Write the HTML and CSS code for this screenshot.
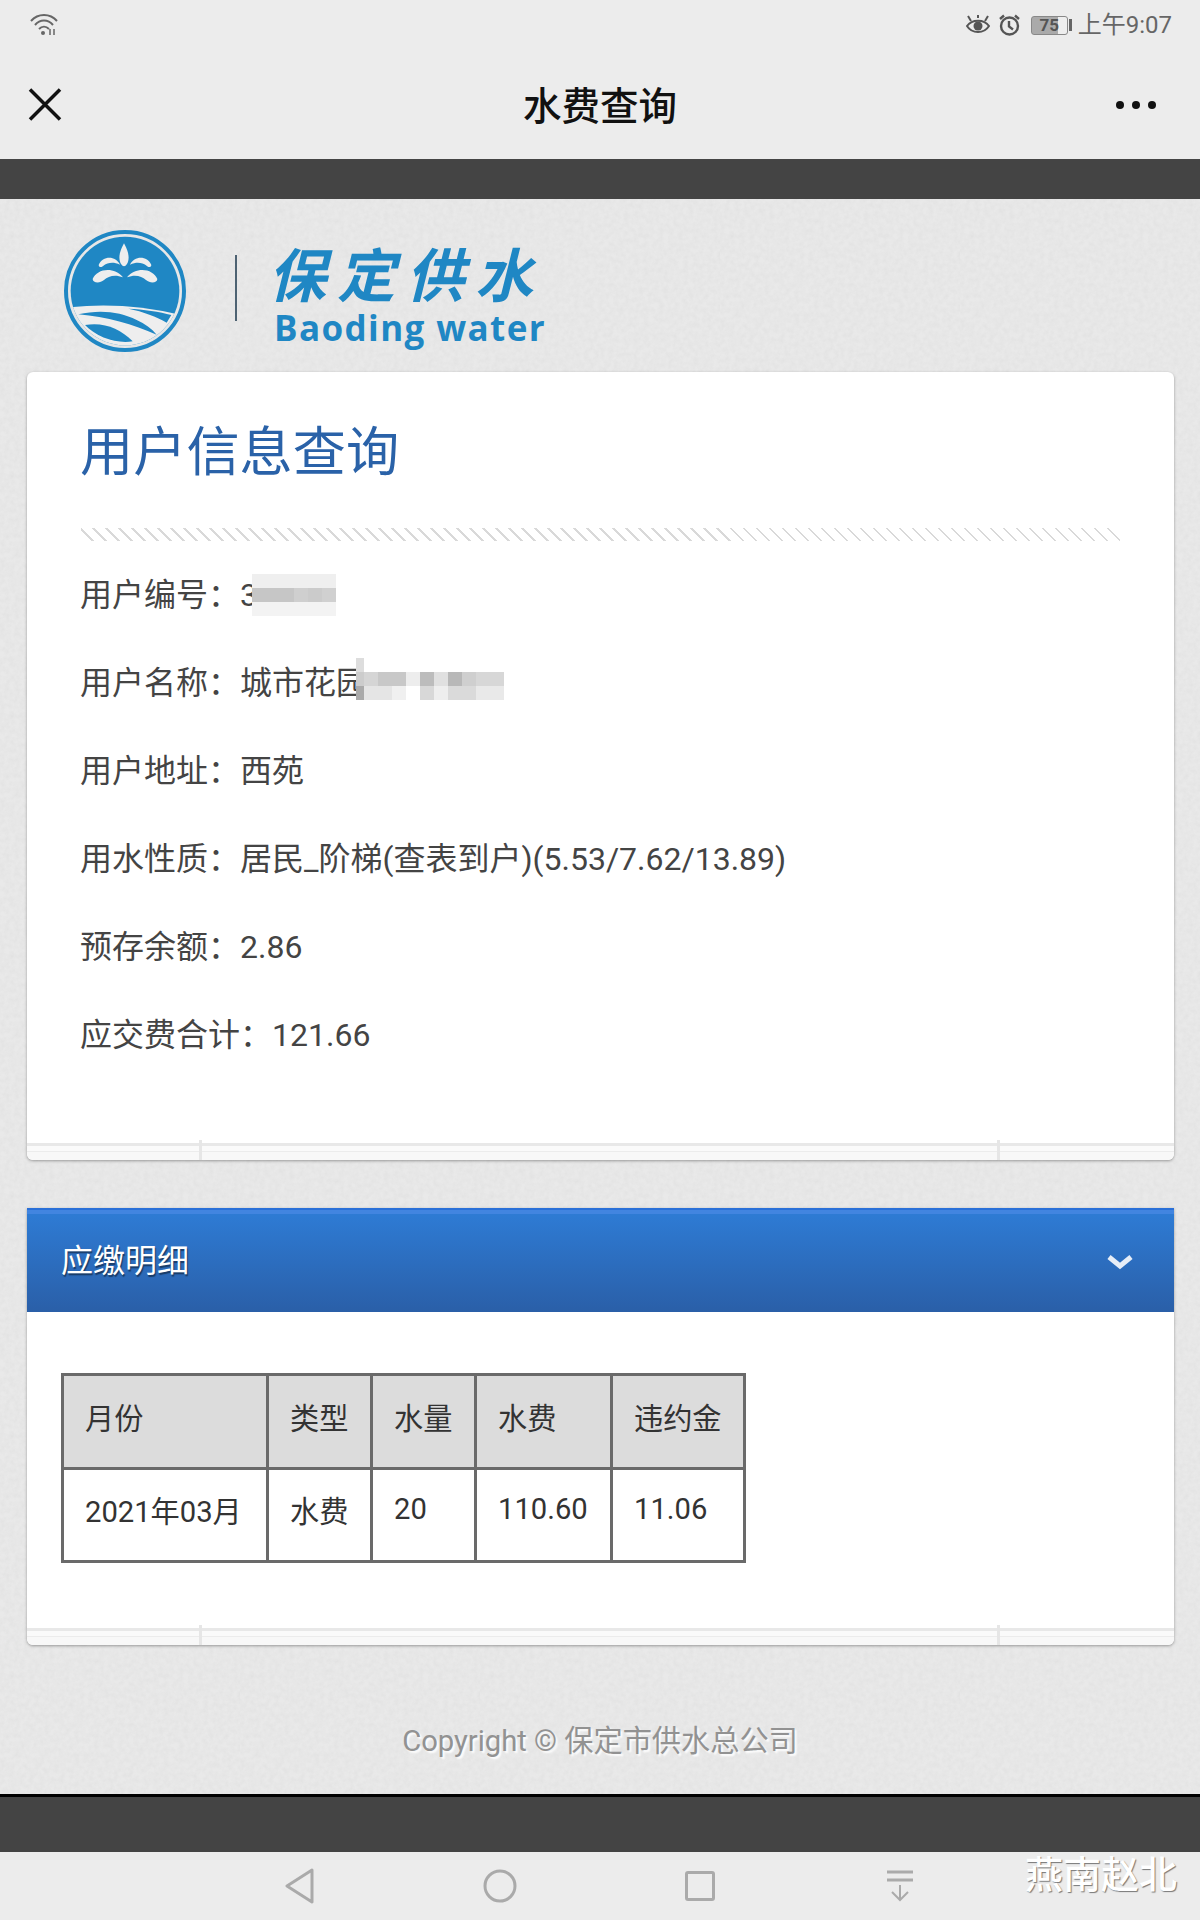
FILE: index.html
```html
<!DOCTYPE html>
<html lang="zh-CN">
<head>
    <meta charset="UTF-8">
    <meta name="viewport" content="width=device-width, initial-scale=1.0">
    <title>水费查询</title>
    <link rel="stylesheet" href="styles.css">
</head>
<body>
    <header class="appbar">
        <div class="status">
            <svg class="wifi" width="28" height="23" viewBox="0 0 28 23" fill="none" stroke="#666" stroke-width="2">
                <path d="M1 8 C8 0 20 0 27 8"/>
                <path d="M5 12 C10 6 18 6 23 12"/>
                <path d="M9 16 C12 13 16 13 19 16"/>
                <circle cx="13" cy="20" r="2" fill="#666" stroke="none"/>
                <path d="M20 16 v6 M24 16 v6" stroke-width="1.5"/>
            </svg>
            <div class="status-right">
                <svg width="24" height="22" viewBox="0 0 24 22" fill="none" stroke="#555" stroke-width="2">
                    <path d="M1 12 C6 5 18 5 23 12 C18 20 6 20 1 12Z"/>
                    <circle cx="12" cy="12" r="4.5" fill="#555" stroke="none"/>
                    <path d="M2 2 L5 7 M22 2 L19 7 M12 1 v3"/>
                </svg>
                <svg class="alarm" width="23" height="22" viewBox="0 0 23 22" fill="none" stroke="#555" stroke-width="2.4">
                    <circle cx="11.5" cy="12" r="8.5"/>
                    <path d="M11 7 v5.5 l4 3"/>
                    <path d="M2 5 L6 1.5 M21 5 L17 1.5"/>
                </svg>
                <div class="battery"><span class="battery-body">75</span><span class="battery-tip"></span></div>
                <span class="time">上午9:07</span>
            </div>
        </div>
        <div class="navbar">
            <svg class="close" width="34" height="33" viewBox="0 0 34 33" stroke="#111" stroke-width="3.5">
                <path d="M2 1.5 L32 31.5 M32 1.5 L2 31.5"/>
            </svg>
            <h2 class="page-title">水费查询</h2>
            <div class="more"><i></i><i></i><i></i></div>
        </div>
    </header>
    <div class="topbar"></div>

    <main class="content">
        <div class="brand">
            <svg class="brand-mark" width="160" height="140" viewBox="0 0 480 420">
                <defs><clipPath id="markClip"><circle cx="225" cy="213" r="163"/></clipPath></defs>
                <circle cx="225" cy="213" r="177" fill="none" stroke="#1f87c4" stroke-width="12"/>
                <g clip-path="url(#markClip)">
                    <rect width="480" height="420" fill="#1f87c4"/>
                    <path d="M40 264 Q230 240 420 292 L420 420 L40 420Z" fill="#eee"/>
                    <path d="M85 283 C150 268 210 275 260 300 C285 312 305 325 320 344 C250 314 170 290 85 283Z" fill="#1f87c4"/>
                    <path d="M235 266 C280 268 330 275 364 285 L350 308 C320 290 280 275 235 266Z" fill="#1f87c4"/>
                    <path d="M105 315 C160 305 210 325 248 364 C200 372 140 352 105 315Z" fill="#1f87c4"/>
                    <g fill="#eee">
                        <path d="M222 70 C208 95 204 115 213 132 Q222 146 231 132 C240 115 236 95 222 70Z"/>
                        <path id="sprayHigh" d="M146 135 C158 106 197 106 210 134 C190 124 172 128 162 136 C155 144 146 142 146 135Z"/>
                        <path id="sprayLow" d="M128 177 C140 146 192 138 219 172 C195 162 175 168 162 180 C148 192 128 188 128 177Z"/>
                        <use href="#sprayHigh" transform="matrix(-1 0 0 1 450 0)"/>
                        <use href="#sprayLow" transform="matrix(-1 0 0 1 450 0)"/>
                    </g>
                </g>
            </svg>
            <span class="brand-divider"></span>
            <div class="brand-name">
                <div class="brand-cn">保定供水</div>
                <div class="brand-en">Baoding water</div>
            </div>
        </div>

        <section class="card user-card">
            <h1 class="card-title">用户信息查询</h1>
            <div class="hatch"></div>
            <p class="info-row">用户编号：3
                <svg class="mosaic mosaic-id" width="84" height="42" shape-rendering="crispEdges">
                    <rect width="84" height="14" fill="#efefef"/>
                    <rect y="14" width="42" height="14" fill="#c6c6c6"/>
                    <rect x="42" y="14" width="14" height="14" fill="#cfcfcf"/>
                    <rect x="56" y="14" width="14" height="14" fill="#cbcbcb"/>
                    <rect x="70" y="14" width="14" height="14" fill="#d0d0d0"/>
                    <rect y="28" width="84" height="14" fill="#f3f3f3"/>
                </svg>
            </p>
            <p class="info-row">用户名称：城市花园
                <svg class="mosaic mosaic-name" width="148" height="42" shape-rendering="crispEdges">
                    <rect width="148" height="42" fill="#fff"/>
                    <rect width="8" height="14" fill="#ddd"/>
                    <rect y="14" width="8" height="14" fill="#ccc"/>
                    <rect y="28" width="8" height="14" fill="#aaa"/>
                    <rect x="8" y="14" width="14" height="14" fill="#d5d5d5"/>
                    <rect x="22" y="14" width="28" height="14" fill="#c8c8c8"/>
                    <rect x="50" y="14" width="14" height="14" fill="#ededed"/>
                    <rect x="64" y="14" width="14" height="14" fill="#bcbcbc"/>
                    <rect x="78" y="14" width="14" height="14" fill="#e0e0e0"/>
                    <rect x="92" y="14" width="14" height="14" fill="#b8b8b8"/>
                    <rect x="106" y="14" width="14" height="14" fill="#cfcfcf"/>
                    <rect x="120" y="14" width="28" height="14" fill="#d7d7d7"/>
                    <rect x="8" y="28" width="28" height="14" fill="#e5e5e5"/>
                    <rect x="36" y="28" width="14" height="14" fill="#f0f0f0"/>
                    <rect x="64" y="28" width="14" height="14" fill="#d8d8d8"/>
                    <rect x="78" y="28" width="14" height="14" fill="#eee"/>
                    <rect x="92" y="28" width="28" height="14" fill="#dadada"/>
                    <rect x="120" y="28" width="28" height="14" fill="#e9e9e9"/>
                </svg>
            </p>
            <p class="info-row">用户地址：西苑</p>
            <p class="info-row">用水性质：居民_阶梯(查表到户)(5.53/7.62/13.89)</p>
            <p class="info-row">预存余额：2.86</p>
            <p class="info-row">应交费合计：121.66</p>
            <div class="card-foot"></div>
        </section>

        <section class="card detail-card">
            <div class="detail-head">
                <span class="detail-title">应缴明细</span>
                <svg class="detail-arrow" width="26" height="16" viewBox="0 0 26 16" fill="none" stroke="#e6edf7" stroke-width="5">
                    <path d="M2 3 L13 12 L24 3"/>
                </svg>
            </div>
            <table class="bill-table">
                <tr><th>月份</th><th>类型</th><th>水量</th><th>水费</th><th>违约金</th></tr>
                <tr><td>2021年03月</td><td>水费</td><td>20</td><td>110.60</td><td>11.06</td></tr>
            </table>
            <div class="card-foot"></div>
        </section>

        <p class="copyright">Copyright © 保定市供水总公司</p>
    </main>

    <div class="bottombar"></div>
    <nav class="softkeys">
        <div class="softkey">
            <svg width="30" height="36" viewBox="0 0 30 36" fill="none" stroke="#aaa" stroke-width="3" stroke-linejoin="round">
                <path d="M27 2 L2 18 L27 34Z"/>
            </svg>
        </div>
        <div class="softkey">
            <svg width="34" height="34" viewBox="0 0 34 34" fill="none" stroke="#aaa" stroke-width="3">
                <circle cx="17" cy="17" r="15"/>
            </svg>
        </div>
        <div class="softkey">
            <svg width="30" height="30" viewBox="0 0 30 30" fill="none" stroke="#aaa" stroke-width="3">
                <rect x="1.5" y="1.5" width="27" height="27" rx="1.5"/>
            </svg>
        </div>
        <div class="softkey">
            <svg width="28" height="32" viewBox="0 0 28 32" fill="none" stroke="#aaa" stroke-width="3">
                <path d="M1 2 H27 M1 10 H27"/>
                <path d="M14 15 V30 M6 22 L14 30 L22 22" stroke-width="2"/>
            </svg>
        </div>
        <span class="watermark">燕南赵北</span>
    </nav>
</body>
</html>
```

FILE: styles.css
```css
* {
    box-sizing: border-box;
}
body {
    margin: 0;
    width: 1200px;
    height: 1920px;
    overflow: hidden;
    display: flex;
    flex-direction: column;
    font-family: Roboto, "Noto Sans CJK SC", sans-serif;
    background-color: #ececec;
}

/* top of the phone screen */
.appbar {
    height: 159px;
    background-color: #ececec;
}
.status {
    height: 50px;
    padding: 14px 28px 0 30px;
    display: flex;
    justify-content: space-between;
    align-items: flex-start;
}
.wifi {
    margin-top: -1px;
}
.status-right {
    display: flex;
    align-items: center;
    height: 22px;
    color: #666;
}
.alarm {
    margin-left: 8px;
}
.battery {
    display: flex;
    align-items: center;
    margin-left: 10px;
}
.battery-body {
    width: 37px;
    height: 19px;
    border: 1px solid #888;
    border-radius: 3px;
    background: linear-gradient(to right, #aaa 75%, #eee 75%);
    color: #555;
    font-size: 17px;
    font-weight: 700;
    line-height: 17px;
    text-align: center;
}
.battery-tip {
    width: 3px;
    height: 12px;
    margin-left: 1px;
    background-color: #666;
}
.time {
    margin-left: 6px;
    font-size: 24px;
    line-height: 22px;
}
.navbar {
    height: 109px;
    padding: 0 44px 0 28px;
    display: grid;
    grid-template-columns: 1fr auto 1fr;
    align-items: center;
}
.page-title {
    margin: 0 0 4px 16px;
    font-size: 38.5px;
    font-weight: 500;
    color: #111;
}
.more {
    justify-self: end;
    display: flex;
    gap: 8px;
}
.more i {
    width: 8px;
    height: 8px;
    border-radius: 50%;
    background-color: #111;
}
.topbar {
    height: 40px;
    background-color: #444;
}

/* page */
.content {
    flex: 1;
    background-color: #e9e9e9;
    background-image: url("data:image/svg+xml,%3Csvg xmlns='http://www.w3.org/2000/svg' width='240' height='240'%3E%3Cfilter id='n'%3E%3CfeTurbulence type='fractalNoise' baseFrequency='.2' numOctaves='2' stitchTiles='stitch'/%3E%3CfeColorMatrix values='0 0 0 0 .6 0 0 0 0 .6 0 0 0 0 .6 0 0 0 .35 -.1'/%3E%3C/filter%3E%3Crect width='240' height='240' filter='url(%23n)'/%3E%3C/svg%3E");
}
.brand {
    height: 173px;
    padding-left: 50px;
    display: flex;
    align-items: flex-start;
}
.brand-mark {
    margin-top: 21px;
}
.brand-divider {
    width: 2px;
    height: 66px;
    margin: 56px 0 0 25px;
    background-color: #4d6272;
}
.brand-name {
    margin: 46px 0 0 36px;
    color: #1f87c4;
}
.brand-cn {
    font-size: 58px;
    font-weight: 700;
    line-height: 64px;
    letter-spacing: 11px;
    white-space: nowrap;
    transform: skewX(-14deg);
}
.brand-en {
    margin-left: 1px;
    font-family: "Open Sans", sans-serif;
    font-size: 35px;
    font-weight: 700;
    line-height: 38px;
    letter-spacing: 1.4px;
    white-space: nowrap;
}

.card {
    position: relative;
    margin: 0 26px 0 27px;
    background-color: #fff;
    border-radius: 6px;
    box-shadow: 0 1px 3px rgba(0, 0, 0, 0.35);
}
.user-card {
    height: 788px;
    padding: 49px 53px 0;
}
.card-title {
    margin: 0;
    font-size: 53.2px;
    font-weight: 400;
    line-height: 64px;
    color: #2a62a8;
}
.hatch {
    height: 13px;
    margin: 43px 1px 0;
    background-image: repeating-linear-gradient(45deg, transparent 0 7.4px, #d9d9d9 7.4px 9.2px);
}
.info-row {
    position: relative;
    margin: 0;
    font-size: 32px;
    line-height: 88px;
    color: #444;
    white-space: nowrap;
}
.hatch + .info-row {
    margin-top: 10px;
}
.mosaic {
    position: absolute;
}
.mosaic-id {
    left: 172px;
    top: 23px;
}
.mosaic-name {
    left: 276px;
    top: 19px;
}
.card-foot {
    position: absolute;
    left: 0;
    right: 0;
    bottom: 0;
    height: 17px;
    border-top: 3px solid #e8e8e8;
    border-radius: 0 0 6px 6px;
    background: linear-gradient(to bottom, #fafafa 0 5px, #ececec 5px 6px, #f8f8f8 6px);
}
.card-foot::before,
.card-foot::after {
    content: "";
    position: absolute;
    top: -6px;
    bottom: 0;
    width: 3px;
    background-color: #e6e6e6;
}
.card-foot::before {
    left: 172px;
}
.card-foot::after {
    right: 174px;
}

.detail-card {
    height: 437px;
    margin-top: 48px;
    border-radius: 0 0 6px 6px;
}
.detail-head {
    height: 104px;
    padding: 0 41px 0 34px;
    display: flex;
    justify-content: space-between;
    align-items: center;
    border-top: 2px solid #2a70d8;
    background: linear-gradient(to bottom, #4285e0 0 4px, #2e7bd4 4px, #2a5fa8 100%);
    color: #fff;
    font-size: 32px;
    text-shadow: 1px 2px 1px rgba(0, 0, 0, 0.45);
}
.detail-title {
    margin-bottom: 7px;
}
.detail-arrow {
    margin-top: 2px;
}
.bill-table {
    width: 682px;
    margin: 61px 0 0 34px;
    table-layout: fixed;
    border-collapse: collapse;
    border: 3px solid #6a6a6a;
    font-size: 29.2px;
    color: #333;
}
.bill-table th,
.bill-table td {
    height: 93px;
    padding: 0 0 12px 21px;
    border: 3px solid #6a6a6a;
    font-weight: 400;
    text-align: left;
    white-space: nowrap;
}
.bill-table th {
    height: 94px;
    background-color: #dcdcdc;
}
.bill-table th:nth-child(1) {
    width: 205px;
}
.bill-table th:nth-child(2),
.bill-table th:nth-child(3) {
    width: 104px;
}
.bill-table th:nth-child(4) {
    width: 136px;
}
.bill-table th:nth-child(5) {
    width: 133px;
}

.copyright {
    margin: 78px 0 0;
    font-size: 29.2px;
    line-height: 36px;
    text-align: center;
    color: #929292;
    text-shadow: 2px 2px 2px #fff;
}

.bottombar {
    height: 58px;
    border-top: 3px solid #000;
    background-color: #444;
}
.softkeys {
    position: relative;
    height: 68px;
    padding-left: 200px;
    display: flex;
    align-items: center;
    background-color: #ececec;
}
.softkey {
    width: 200px;
    display: flex;
    justify-content: center;
}
.watermark {
    position: absolute;
    left: 1025px;
    top: 1px;
    font-size: 38px;
    font-weight: 500;
    line-height: 44px;
    color: #fff;
    text-shadow: 1px 1px 1px #777;
    white-space: nowrap;
}
```
